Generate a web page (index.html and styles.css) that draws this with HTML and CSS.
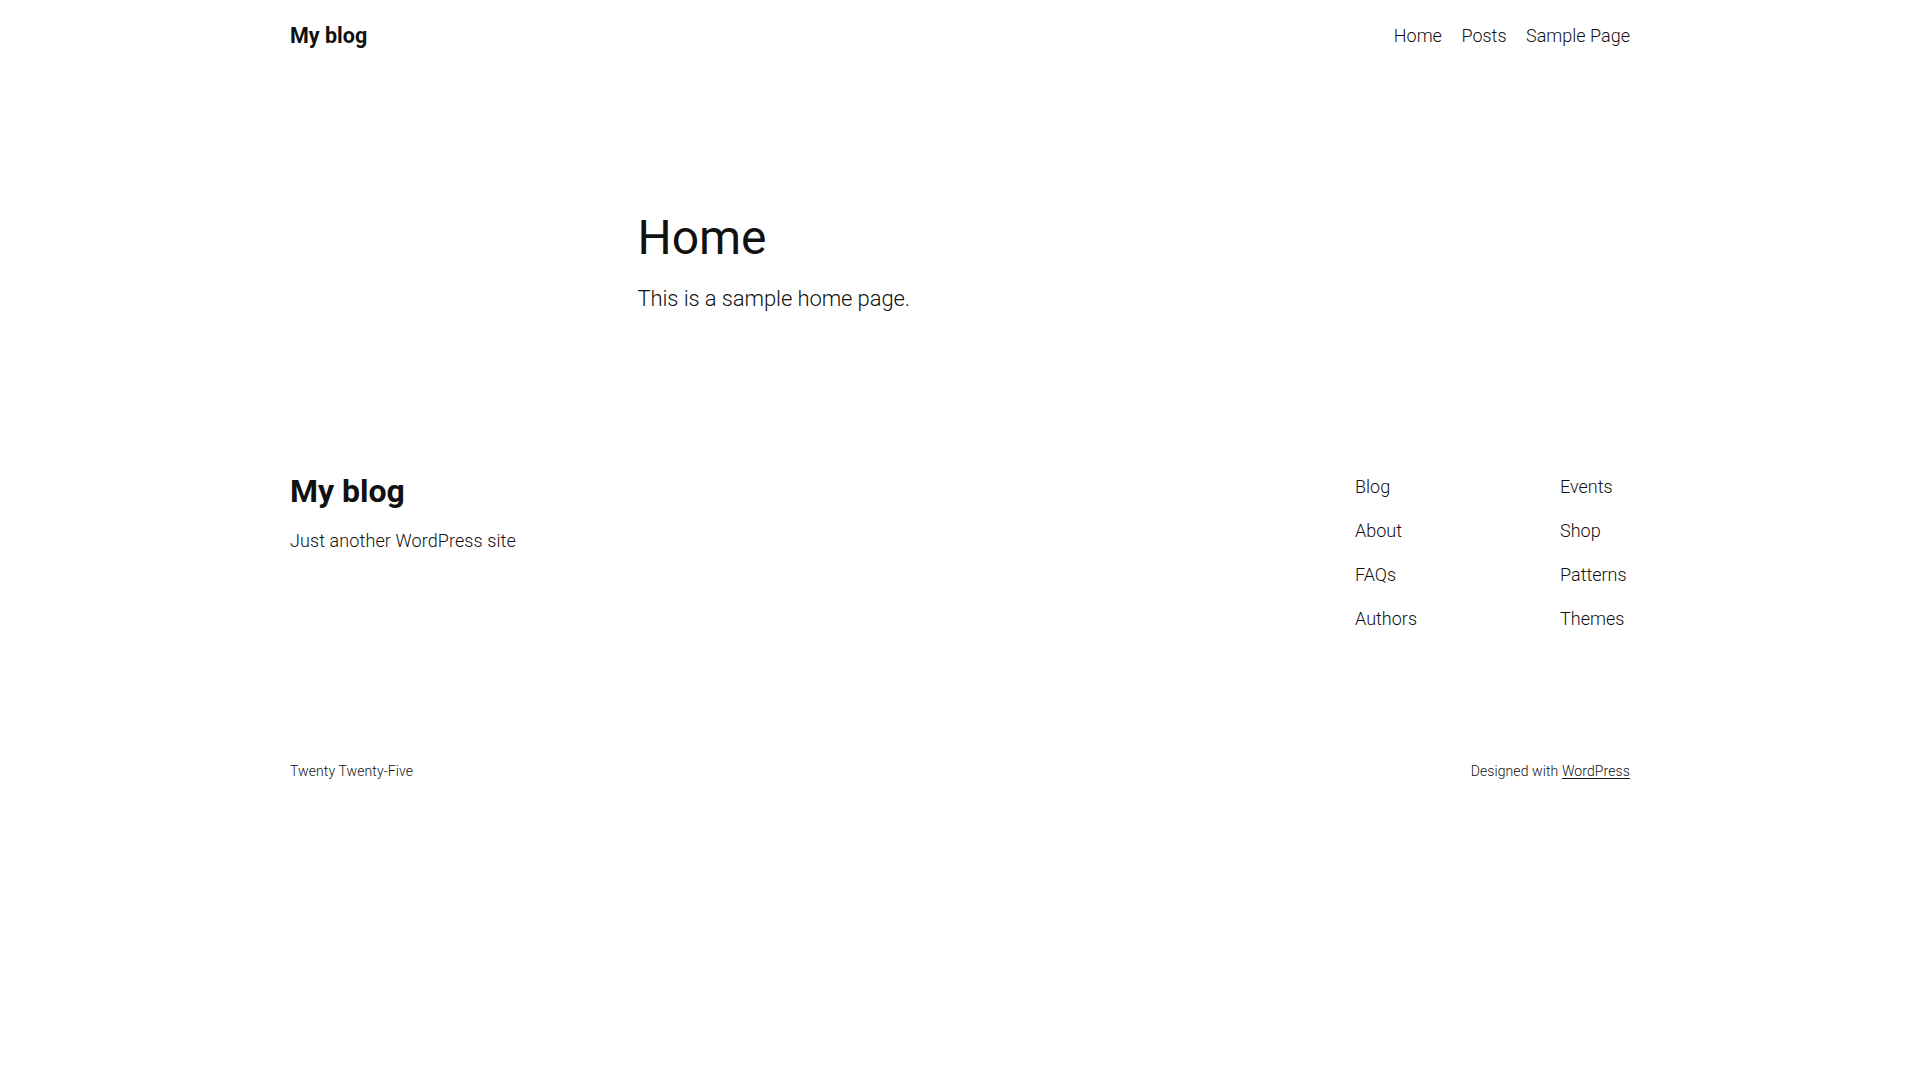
FILE: index.html
```html
<!DOCTYPE html>
<html lang="en">
<head>
<meta charset="utf-8">
<title>My blog</title>
<link rel="stylesheet" href="styles.css">
</head>
<body>
<header class="site-header">
  <div class="wrap header-row">
    <a class="site-title" href="#">My blog</a>
    <nav class="main-nav">
      <a href="#">Home</a>
      <a href="#">Posts</a>
      <a href="#">Sample Page</a>
    </nav>
  </div>
</header>

<main class="site-main">
  <article class="content">
    <h1 class="page-title">Home</h1>
    <p class="page-text">This is a sample home page.</p>
  </article>
</main>

<footer class="site-footer">
  <div class="wrap footer-top">
    <div class="footer-brand">
      <a class="footer-title" href="#">My blog</a>
      <p class="tagline">Just another WordPress site</p>
    </div>
    <div class="footer-navs">
      <nav class="footer-nav">
        <a href="#">Blog</a>
        <a href="#">About</a>
        <a href="#">FAQs</a>
        <a href="#">Authors</a>
      </nav>
      <nav class="footer-nav">
        <a href="#">Events</a>
        <a href="#">Shop</a>
        <a href="#">Patterns</a>
        <a href="#">Themes</a>
      </nav>
    </div>
  </div>
  <div class="wrap footer-bottom">
    <p class="small">Twenty Twenty-Five</p>
    <p class="small">Designed with <a class="underline" href="#">WordPress</a></p>
  </div>
</footer>
</body>
</html>
```
FILE: styles.css
```css
html, body {
  margin: 0;
  padding: 0;
  background: #ffffff;
}

body {
  font-family: Roboto, "Liberation Sans", sans-serif;
  font-weight: 300;
  font-size: 22px;
  line-height: 1.4;
  letter-spacing: -0.1px;
  color: #111111;
}

a {
  color: inherit;
  text-decoration: none;
}

p {
  margin: 0;
}

.wrap {
  max-width: 1340px;
  margin: 0 auto;
}

/* Header */
.site-header {
  padding-top: 21px;
}

.header-row {
  display: flex;
  justify-content: space-between;
  align-items: center;
}

.site-title {
  font-size: 21.5px;
  font-weight: 700;
  line-height: 1.4;
  letter-spacing: 0;
}

.main-nav {
  display: flex;
  gap: 19.5px;
  font-size: 18px;
  line-height: 1.4;
  letter-spacing: 0;
}

/* Main */
.site-main {
  padding-top: 159.5px;
  padding-bottom: 154.8px;
}

.content {
  max-width: 645px;
  margin: 0 auto;
}

.page-title {
  margin: 0;
  font-size: 48px;
  font-weight: 400;
  line-height: 1.125;
  letter-spacing: -0.1px;
}

.page-text {
  margin-top: 19.2px;
  font-size: 22px;
  line-height: 1.4;
}

/* Footer */
.footer-top {
  display: flex;
  justify-content: space-between;
  align-items: flex-start;
}

.footer-title {
  display: block;
  font-size: 32px;
  font-weight: 700;
  line-height: 1.4;
  letter-spacing: 0;
}

.tagline {
  margin-top: 13.6px;
  font-size: 18px;
  line-height: 1.4;
  letter-spacing: 0.1px;
}

.footer-navs {
  display: grid;
  grid-template-columns: 205px 70px;
  padding-top: 4.6px;
}

.footer-nav {
  display: flex;
  flex-direction: column;
  align-items: flex-start;
  gap: 18.8px;
  font-size: 18px;
  line-height: 1.4;
  letter-spacing: 0;
}

.footer-bottom {
  display: flex;
  justify-content: space-between;
  align-items: center;
  margin-top: 131.3px;
}

.small {
  font-size: 14px;
  line-height: 1.4;
  letter-spacing: 0.1px;
}

.underline {
  text-decoration: underline;
  text-underline-offset: 2px;
  text-decoration-thickness: 1px;
}
```
